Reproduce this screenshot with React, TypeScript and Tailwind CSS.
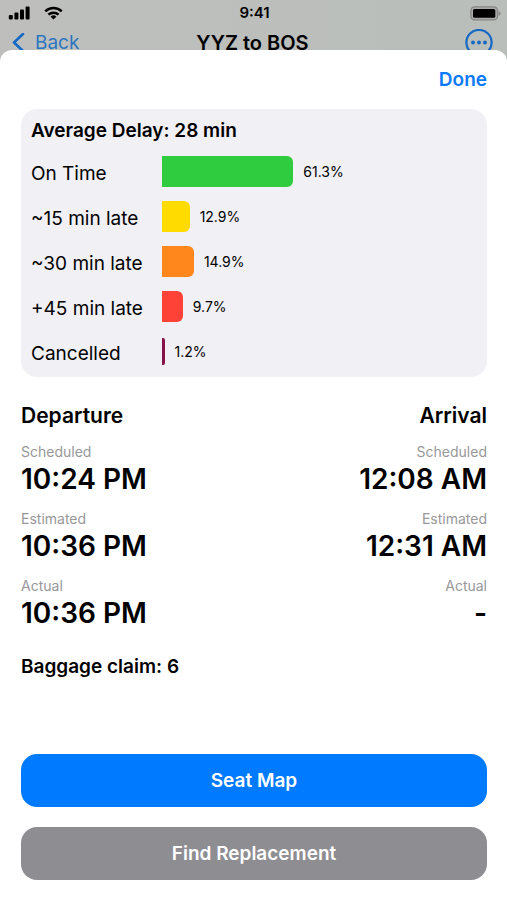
import React from "react";

type DelayRow = {
  label: string;
  percent: number;
  bar: string;
};

const delays: DelayRow[] = [
  { label: "On Time", percent: 61.3, bar: "h-[31px] rounded-r-md bg-[#30cc40]" },
  { label: "~15 min late", percent: 12.9, bar: "h-[31px] rounded-r-md bg-[#ffdb00]" },
  { label: "~30 min late", percent: 14.9, bar: "h-[31px] rounded-r-md bg-[#ff871b]" },
  { label: "+45 min late", percent: 9.7, bar: "h-[31px] rounded-r-md bg-[#ff4238]" },
  { label: "Cancelled", percent: 1.2, bar: "h-[27px] rounded-r-xs bg-[#86144b]" },
];

// Share of the chart's width that one percent takes up.
const BAR_SCALE = 0.68;

const departure = [
  ["Scheduled", "10:24 PM"],
  ["Estimated", "10:36 PM"],
  ["Actual", "10:36 PM"],
];

const arrival = [
  ["Scheduled", "12:08 AM"],
  ["Estimated", "12:31 AM"],
  ["Actual", "-"],
];

function StatusBar() {
  return (
    <div className="grid h-[26px] grid-cols-3 items-center pl-2 pr-[6px]">
      <div className="flex items-center gap-[14px]">
        <svg width="22" height="14" viewBox="0 0 22 14" aria-label="Signal">
          <rect x="0.8" y="9" width="4" height="4.6" rx="1" />
          <rect x="6.4" y="6.6" width="4" height="7" rx="1" />
          <rect x="12" y="3.6" width="4" height="10" rx="1" />
          <rect x="17.6" y="0.6" width="4" height="13" rx="1" />
        </svg>
        <svg width="19" height="14" viewBox="0 0 19 14" aria-label="Wi-Fi">
          <g fill="none" stroke="#000" strokeWidth="2.5">
            <path d="M1.3 5.4a11.8 11.8 0 0 1 16.4 0" />
            <path d="M4.4 8.7a7.4 7.4 0 0 1 10.2 0" />
          </g>
          <path d="M9.5 13.6 6.6 10.7a4.2 4.2 0 0 1 5.800 0z" />
        </svg>
      </div>
      <span className="text-center text-[15px] leading-5 font-semibold">9:41</span>
      <svg className="justify-self-end" width="31" height="15" viewBox="0 0 31 15" aria-label="Battery">
        <rect x="0.9" y="0.9" width="26.6" height="12.9" rx="3.6" fill="#aaaaaa" stroke="#858686" strokeWidth="1.3" />
        <rect x="3" y="3" width="22.3" height="8.8" rx="1.6" />
        <path d="M28.6 5v5c1.2-.5 1.9-1.4 1.9-2.5S29.8 5.5 28.6 5z" fill="#858686" />
      </svg>
    </div>
  );
}

function NavBar() {
  return (
    <nav className="grid h-[34px] grid-cols-[1fr_auto_1fr] items-center pl-3 pr-[14px]">
      <button className="flex items-center gap-[10px] text-[19px] text-[#2a76c0]">
        <svg width="13" height="20" viewBox="0 0 13 20" fill="none" stroke="#1568c4" strokeWidth="2.6" strokeLinecap="round" strokeLinejoin="round">
          <path d="M11 1 2 9.5l9 8.5" />
        </svg>
        Back
      </button>
      <h1 className="text-xl font-semibold">YYZ to BOS</h1>
      <button className="justify-self-end" aria-label="More">
        <svg width="28" height="28" viewBox="0 0 28 28">
          <circle cx="14" cy="13.5" r="12.6" fill="none" stroke="#1568c4" strokeWidth="2.2" />
          <g fill="#1568c4">
            <circle cx="8" cy="13.5" r="1.9" />
            <circle cx="14" cy="13.5" r="1.9" />
            <circle cx="20" cy="13.5" r="1.9" />
          </g>
        </svg>
      </button>
    </nav>
  );
}

function DelayCard() {
  return (
    <section className="rounded-2xl bg-[#f1f0f5] px-[10px] pt-2 pb-[3px]">
      <h2 className="h-7 text-[19px] leading-7 font-semibold">Average Delay: 28 min</h2>
      <ul className="pt-1">
        {delays.map((row) => (
          <li key={row.label} className="flex h-[45px] items-center">
            <span className="w-[131px] shrink-0 pt-1 text-[19px] leading-7">{row.label}</span>
            <div className="flex flex-1 items-center gap-[10px]">
              <div className={`shrink-0 ${row.bar}`} style={{ width: `${row.percent * BAR_SCALE}%` }} />
              <span className="text-sm">{row.percent}%</span>
            </div>
          </li>
        ))}
      </ul>
    </section>
  );
}

function Times({ title, rows }: { title: string; rows: string[][] }) {
  return (
    <div>
      <h2 className="text-[21px] leading-7 font-semibold">{title}</h2>
      <dl className="flex flex-col gap-[13px] pt-3">
        {rows.map(([label, time]) => (
          <div key={label}>
            <dt className="text-sm leading-5 text-[#98989a]">{label}</dt>
            <dd className="text-[28px] leading-[34px] font-semibold">{time}</dd>
          </div>
        ))}
      </dl>
    </div>
  );
}

export default function App() {
  return (
    <div className="flex min-h-screen flex-col bg-linear-to-r from-[#bebfbd] to-[#b9beba] font-['Inter','Liberation_Sans',sans-serif] text-black">
      <header>
        <StatusBar />
        <NavBar />
      </header>
      <main className="relative -mt-[10px] flex flex-1 flex-col rounded-t-xl bg-white pr-5 pb-5 pl-[21px]">
        <div className="flex h-[59px] items-center justify-end">
          <button className="pt-0.5 text-[19px] font-semibold text-[#0a7aff]">Done</button>
        </div>
        <DelayCard />
        <div className="flex justify-between pt-[25px]">
          <Times title="Departure" rows={departure} />
          <div className="text-right">
            <Times title="Arrival" rows={arrival} />
          </div>
        </div>
        <p className="pt-[23px] text-[19px] leading-7 font-semibold">Baggage claim: 6</p>
        <div className="mt-auto flex flex-col gap-5 pt-6 text-[19px] font-semibold text-white">
          <button className="h-[53px] rounded-2xl bg-[#007aff] pt-0.5">Seat Map</button>
          <button className="h-[53px] rounded-2xl bg-[#8e8d92] pt-0.5">Find Replacement</button>
        </div>
      </main>
    </div>
  );
}
